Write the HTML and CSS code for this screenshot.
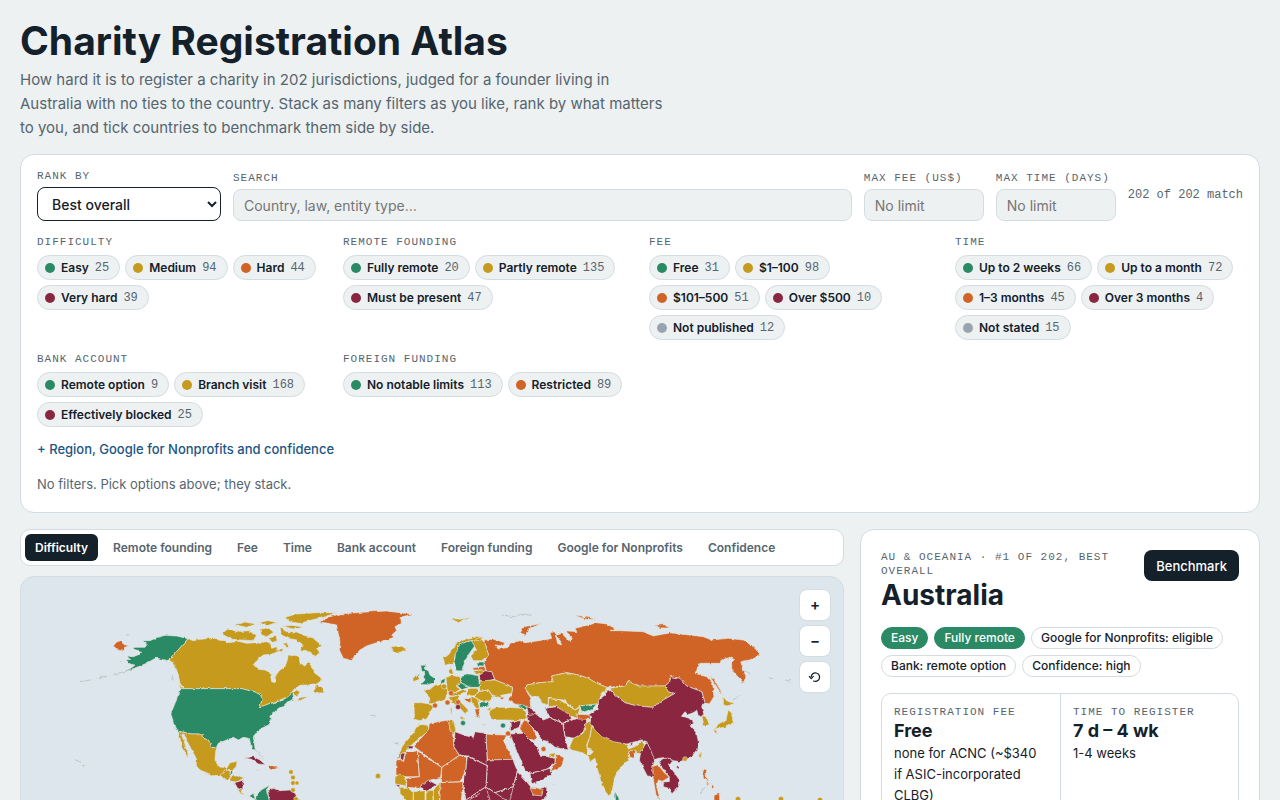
FILE: index.html
```html
<!DOCTYPE html>
<html lang="en">
<head>
<meta charset="utf-8">
<meta name="viewport" content="width=device-width, initial-scale=1">
<title>Charity Registration Atlas</title>
<link rel="stylesheet" href="styles.css">
</head>
<body>
<header class="masthead">
  <h1>Charity Registration Atlas</h1>
  <p>How hard it is to register a charity in 202 jurisdictions, judged for a founder living in Australia with no ties to the country. Stack as many filters as you like, rank by what matters to you, and tick countries to benchmark them side by side.</p>
</header>

<section class="card filters">
  <div class="controls">
    <div class="field rank"><label class="label" for="rank">Rank by</label><select id="rank"><option>Best overall</option></select></div>
    <div class="field search"><label class="label" for="search">Search</label><input id="search" type="search" placeholder="Country, law, entity type…"></div>
    <div class="field limit"><label class="label" for="fee">Max fee (US$)</label><input id="fee" type="text" placeholder="No limit"></div>
    <div class="field limit"><label class="label" for="days">Max time (days)</label><input id="days" type="text" placeholder="No limit"></div>
    <div class="matches">202 of 202 match</div>
  </div>
  <div class="groups">
    <div class="group"><div class="label">Difficulty</div><div class="chips">
      <button class="chip easy">Easy <span>25</span></button><button class="chip medium">Medium <span>94</span></button><button class="chip hard">Hard <span>44</span></button><button class="chip severe">Very hard <span>39</span></button>
    </div></div>
    <div class="group"><div class="label">Remote founding</div><div class="chips">
      <button class="chip easy">Fully remote <span>20</span></button><button class="chip medium">Partly remote <span>135</span></button><button class="chip severe">Must be present <span>47</span></button>
    </div></div>
    <div class="group"><div class="label">Fee</div><div class="chips fee-chips">
      <button class="chip easy">Free <span>31</span></button><button class="chip medium">$1–100 <span>98</span></button><button class="chip hard">$101–500 <span>51</span></button><button class="chip severe">Over $500 <span>10</span></button><button class="chip unknown">Not published <span>12</span></button>
    </div></div>
    <div class="group"><div class="label">Time</div><div class="chips">
      <button class="chip easy">Up to 2 weeks <span>66</span></button><button class="chip medium">Up to a month <span>72</span></button><button class="chip hard">1–3 months <span>45</span></button><button class="chip severe">Over 3 months <span>4</span></button><button class="chip unknown">Not stated <span>15</span></button>
    </div></div>
    <div class="group"><div class="label">Bank account</div><div class="chips">
      <button class="chip easy">Remote option <span>9</span></button><button class="chip medium">Branch visit <span>168</span></button><button class="chip severe">Effectively blocked <span>25</span></button>
    </div></div>
    <div class="group"><div class="label">Foreign funding</div><div class="chips">
      <button class="chip easy">No notable limits <span>113</span></button><button class="chip hard">Restricted <span>89</span></button>
    </div></div>
  </div>
  <button class="more">+ Region, Google for Nonprofits and confidence</button>
  <p class="active-filters">No filters. Pick options above; they stack.</p>
</section>

<main class="columns">
  <div class="left">
    <nav class="tabs" aria-label="Colour map by">
      <button class="tab current">Difficulty</button><button class="tab">Remote founding</button><button class="tab">Fee</button><button class="tab">Time</button><button class="tab">Bank account</button><button class="tab">Foreign funding</button><button class="tab">Google for Nonprofits</button><button class="tab">Confidence</button>
    </nav>
    <div class="map">
      <svg viewBox="21 577 822 420" role="img" aria-label="World map coloured by difficulty">
        <defs>
          <filter id="coast" x="-5%" y="-5%" width="110%" height="110%">
            <feTurbulence type="fractalNoise" baseFrequency="0.22" numOctaves="2" seed="4" result="n"/>
            <feDisplacementMap in="SourceGraphic" in2="n" scale="3" xChannelSelector="R" yChannelSelector="G"/>
          </filter>
        </defs>
        <g filter="url(#coast)">
        <!-- Alaska, Chukotka tip and Hawaii -->
        <g transform="translate(70 600) scale(.33333)" class="land">
          <path class="g" d="M354 116 300 178 290 182 275 178 258 174 240 184 225 192 205 200 185 208 160 216 185 203 195 195 180 192 168 180 180 178 172 168 190 170 205 164 215 154 190 148 195 142 222 142 232 134 218 122 240 122 262 112 285 106 320 108Z"/>
          <path class="o" d="M130 138 140 126 152 122 160 132 176 138 164 142 156 152 144 150Z"/>
          <path class="thin" d="M185 207 160 216 130 223M110 228 80 236M62 240 28 245M168 105 180 104M150 182 158 184M308 185 325 215M318 180 325 205M306 225 310 242"/>
          <path class="g" d="M36 494 44 497 40 502Z"/><path class="thin" d="M14 479 22 482 32 488"/>
        </g>
        <!-- Americas -->
        <g transform="translate(200 600) scale(.33333)" class="land">
          <path class="y" d="M-36 116-20 122 0 118 20 116 45 112 55 120 75 122 90 128 115 124 140 130 165 128 180 130 195 122 210 130 215 145 230 140 235 155 215 162 190 165 170 180 160 195 175 208 195 210 210 218 215 245 225 248 228 225 240 210 255 200 262 180 265 168 285 166 298 172 300 190 315 198 325 185 335 200 345 220 362 232 368 240 345 255 320 255 300 256 282 268 272 282 290 270 300 276 292 290 278 282 270 292 255 294 230 304 205 312 178 322 186 300 182 285 165 276 150 272 125 266H-48L-60 250-65 225-72 205-80 190-90 178Z"/>
          <path class="y" d="M340 274 350 252 365 262 373 279 355 278ZM286 304 300 292 325 290 305 300ZM-68 250-48 268-55 270Z"/>
          <path class="y" d="M240 82 260 95 290 96 310 105 340 115 366 137 350 145 360 160 342 167 320 152 300 150 310 135 290 120 265 115 245 105ZM65 102 85 85 110 95 145 92 170 105 160 122 125 120 95 118ZM255 52 290 42 350 38 410 38 370 52 335 60 300 70 270 66ZM105 74 135 66 165 72 140 82ZM175 68 205 62 235 68 200 76ZM180 88 198 84 222 96 200 110 184 104ZM205 115 228 108 232 122 215 128ZM228 148 250 146 246 160ZM250 78 280 76 310 82 280 88ZM248 130 262 128 262 142Z"/>
          <path class="g" d="M-60 266H125L150 272 165 276 182 285 186 300 178 322 205 312 240 304 262 292 278 278 282 298 262 306 250 318 235 325 220 340 212 345 215 360 200 378 185 385 165 400 160 412 166 450 155 448 148 415 130 412 115 420 100 412 75 422 55 430 48 445 35 440 25 420 15 415 5 405-5 402-25 402-45 398-65 394-80 370-87 340-75 310-62 280Z"/>
          <path class="y" d="M-65 394-45 398-25 402-5 402 5 405 15 415 25 420 35 440 48 445 45 480 58 500 80 505 90 488 112 484 108 500 98 510 85 508 78 526 60 526 40 527 0 510-12 497-10 478-25 450-38 425-48 402-55 404-46 430-36 462-38 472-55 435Z"/>
          <path class="y" d="M60 526 76 512 90 510 92 530 80 542ZM82 538 100 528 118 528 132 534 108 546 95 544ZM112 566 124 570 132 586 120 578Z"/>
          <path class="g" d="M92 512 98 510 96 526 90 526ZM132 584 145 590 160 580 166 598 150 592ZM168 600 175 575 208 556 200 572 208 600 204 620 166 620Z"/>
          <path class="m" d="M104 548 130 540 128 572 112 564ZM203 572 220 565 240 572 270 570 288 582 280 600 282 620 215 620 208 600ZM132 474 160 470 180 480 196 494 175 492 155 478Z"/>
          <path class="o" d="M204 498 216 496 236 504 216 510ZM285 600 300 598 300 620 285 620Z"/>
          <path class="y" d="M168 508 178 509 174 512ZM240 511 248 511 246 514Z"/>
          <path class="o" d="M358 66 390 50 420 42 500 36 560 33 600 38 638 43 600 52 605 70 585 80 590 92 575 105 582 112 560 120 530 128 500 138 480 150 465 165 455 182 430 175 418 150 420 125 415 100 410 75 385 70Z"/>
          <path class="y" d="M572 142 585 140 600 138 620 148 600 157 582 155Z"/>
          <path class="thin" d="M165 450 182 458M174 460 190 476M512 346 528 348M584 428 592 432"/>
        </g>
        <!-- Europe, Africa and Asia -->
        <g transform="translate(380 600) scale(.33333)" class="land">
          <path class="o" d="M312 120 340 118 375 128 368 138 345 135 355 147 385 142 390 130 420 122 435 128 490 120 515 115 510 98 525 95 532 130 545 135 540 118 525 108 545 100 570 125 575 110 555 92 590 95 585 85 625 75 650 68 680 72 705 85 690 92 720 92 790 95 820 108 870 98 970 110 995 120 1045 115 1090 120 1120 140 1140 162 1110 180 1082 185 1098 230 1090 248 1055 210 1055 190 1065 180 1050 172 1025 180 1020 190 960 190 945 220 980 230 998 250 1002 290 988 312 975 308 965 275 920 258 900 235 870 230 870 245 855 258 780 260 745 243 735 258 680 262 650 250 625 235 595 225 560 218 515 228 520 245 480 248 440 255 440 275 450 290 452 325 430 318 405 312 385 300 395 280 398 262 370 250 345 240 335 215 318 210 312 186 325 165 315 130Z"/>
          <path class="o" d="M420 100 432 80 485 70 445 86 438 106ZM580 45 605 48 650 58 620 58ZM826 76 850 74 870 84 840 84ZM990 230 1002 238 1032 288 1018 272Z"/>
          <path class="y" d="M188 172 205 165 230 130 255 118 285 108 312 113 300 122 275 122 260 125 238 135 226 162 222 188 195 196ZM272 124 300 112 315 130 326 165 305 182 280 182 272 168 290 150ZM205 210 215 200 220 222 208 222ZM98 234 115 225 118 238 100 245ZM34 142 48 138 66 139 80 148 60 157 42 155ZM210 54 240 58 275 52 235 68Z"/>
          <path class="g" d="M238 135 260 125 275 124 284 138 265 165 255 185 245 213 228 212 224 188 226 162ZM122 196 138 195 135 208 145 212 150 225 165 236 160 250 140 254 122 254 135 240 130 230 135 222 125 212ZM114 220 121 220 120 227ZM290 186 312 186 312 198 294 197ZM182 242 196 234 194 248 184 250ZM242 230 270 222 296 228 298 262 270 262 245 252ZM230 256 250 250 268 262 245 268ZM298 306 330 305 325 320 300 322Z"/>
          <path class="o" d="M278 204 312 199 318 210 300 210 280 210Z"/>
          <path class="m" d="M298 225 315 212 335 215 344 238 325 244 300 242Z"/>
          <path class="y" d="M280 212 306 210 308 220 292 226ZM198 232 215 226 240 230 245 252 230 256 240 268 225 278 202 276ZM130 270 150 268 165 255 185 251 200 268 203 280 195 300 175 307 150 312 148 290ZM102 308 125 308 150 312 160 320 150 340 140 357 120 362 103 358ZM203 282 225 278 250 268 258 274 245 284 215 290ZM258 276 270 265 292 265 296 272 280 288 258 286ZM292 275 325 270 338 290 330 303 298 302 284 288ZM298 262 300 243 345 240 370 250 398 262 395 280 362 286 368 297 352 290 335 284 325 270 300 274ZM205 292 235 284 236 300 265 330 258 345 250 335 232 318 215 306ZM236 350 252 352 250 360ZM210 325 216 325 215 345ZM272 290 292 294 298 322 290 328 274 305Z"/>
          <path class="o" d="M284 328 300 325 296 340 301 358 290 350ZM252 296 272 294 274 308 260 304ZM358 292 374 292 366 300Z"/>
          <path class="y" d="M328 330 350 322 385 322 430 325 442 355 415 362 380 360 340 360 328 345ZM320 324 334 324 328 332ZM305 372 322 374 310 376Z"/>
          <path class="g" d="M412 312 440 318 442 327 420 324Z"/>
          <path class="m" d="M440 320 455 326 470 345 446 345ZM390 365 422 362 420 380 392 394Z"/>
          <path class="o" d="M422 376 435 358 450 372 470 410 462 422 425 402ZM384 400 400 405 410 395 405 415 390 415Z"/>
          <path class="y" d="M440 255 480 248 520 245 515 228 560 218 595 225 625 235 650 250 680 262 675 275 660 290 655 312 600 318 585 330 550 300 505 295 505 318 488 308 475 290 455 290 438 270ZM690 265 735 258 745 243 775 258 855 258 865 275 885 280 850 300 820 322 770 318 735 308 705 285ZM505 295 540 300 585 330 600 322 592 355 565 345 525 318 505 320Z"/>
          <path class="m" d="M495 325 530 320 570 345 575 356 548 370 510 352ZM440 345 465 340 490 360 510 352 548 370 555 410 565 450 525 442 505 425 485 420 470 395 445 370ZM550 370 575 360 610 352 622 364 610 395 585 415 555 410ZM390 402 430 400 470 440 480 465 525 475 525 490 500 508 450 520 435 510 405 440ZM450 520 510 505 515 525 455 552Z"/>
          <path class="g" d="M602 318 650 312 635 330 602 338Z"/>
          <path class="o" d="M588 342 630 345 632 358 595 357ZM510 515 525 490 528 462 552 475 545 500Z"/>
          <path class="y" d="M505 463 526 458 522 474ZM565 448 580 415 610 400 620 365 645 362 650 375 635 385 630 410 620 435 625 470 608 458ZM635 378 662 375 665 395 685 415 740 432 745 447 765 440 785 422 795 436 785 462 770 460 745 460 745 480 720 505 705 530 695 580 685 588 665 550 650 500 645 475 630 485 625 470 640 455 620 440 630 410Z"/>
          <path class="m" d="M680 266 705 285 735 308 770 318 820 322 850 300 885 280 865 275 855 258 870 245 870 230 900 235 920 258 965 275 975 308 965 318 972 345 955 348 950 330 925 345 915 335 905 348 925 354 940 365 928 375 950 400 955 425 950 450 935 470 900 485 880 482 860 472 835 475 822 480 810 450 800 425 785 420 740 432 700 425 665 410 645 390 630 370 635 350 625 345 655 325 655 300 675 285ZM745 430 760 430 758 438ZM888 500 900 496 896 508Z"/>
          <path class="o" d="M745 452 768 452 762 475 750 472ZM814 500 835 494 850 515 868 532 845 545 835 540 830 560 842 602 828 584 822 550Z"/>
          <path class="m" d="M782 458 800 425 812 450 824 482 818 500 820 530 802 528 790 505 778 480ZM835 482 860 472 880 484 865 492 895 535 896 560 875 582 870 566 850 560 850 546 868 545 868 530 850 510Z"/>
          <path class="y" d="M965 345 980 352 988 374 972 378ZM1030 290 1040 302 1060 310 1045 318 1030 315ZM1045 328 1055 340 1060 370 1035 382 1010 385 1000 395 1015 372 1038 360ZM1000 392 1010 390 1010 402ZM958 460 966 456 962 480Z"/>
          <path class="o" d="M968 508 980 508 978 530 986 545 970 535ZM978 545 988 548 984 556ZM992 550 1002 560 996 568ZM1002 586 1018 580 1020 610 1002 600Z"/>
          <path class="g" d="M702 578 715 590 720 612 704 612Z"/>
          <!-- Africa -->
          <path class="y" d="M118 372 143 376 147 392 100 430 75 455 48 482 70 435 95 405ZM205 362 220 360 228 390 218 408 208 390Z"/>
          <path class="o" d="M148 370 205 360 210 390 218 405 222 440 238 466 185 502 100 438 145 392ZM318 402 345 404 382 405 370 420 398 478 322 480ZM48 482 72 482 76 455 112 453 118 530 75 530 48 525ZM112 453 185 502 182 532 145 542 120 565 80 562 80 535 118 530ZM185 502 238 466 260 472 258 510 240 545 185 548ZM180 548 250 545 242 620 180 620Z"/>
          <path class="m" d="M225 395 260 408 280 412 285 395 318 400 322 497 262 468 238 465 222 440ZM322 497 322 480 398 478 412 512 400 560 345 578 318 560ZM262 468 322 497 318 560 258 600 250 560 258 510ZM120 560 145 540 172 555 140 574ZM258 600 318 560 345 578 400 560 412 515 440 545 460 570 500 560 500 590 440 640 240 640ZM80 438 100 438 98 446 82 446ZM62 462 75 458 70 480 62 482Z"/>
          <path class="border" d="M318 560 330 600M345 578 385 605M400 560 390 600M268 600 300 580"/>
          <path class="y" d="M45 530 60 522 78 532 78 558 45 552ZM60 562 82 562 100 578 100 625 60 580ZM100 575 135 572 135 620 100 620ZM138 574 158 570 160 620 138 620ZM160 570 180 548 178 620 160 620Z"/>
          <path class="m" d="M45 554 60 554 58 562Z"/>
          <path class="o" d="M450 565 490 568 485 588 460 585Z"/>
          <path class="thin" d="M365 45 400 50 430 42 455 46M1090 212 1110 220M1165 234 1180 236M1215 240 1230 243M1058 300 1080 286M960 580 975 562M520 552 524 556M45 430 55 432"/>
        </g>
        </g>
        <!-- Small states -->
        <g class="dots">
          <g class="y"><circle cx="291" cy="772" r="2.3"/><circle cx="293" cy="777.5" r="2.3"/><circle cx="293" cy="783" r="2.3"/><circle cx="297" cy="783" r="2"/><circle cx="293" cy="790" r="2.3"/><circle cx="296" cy="799" r="2.3"/><circle cx="378" cy="776" r="2.6"/><circle cx="444" cy="686.5" r="2.6"/><circle cx="685" cy="759" r="2.3"/><circle cx="738" cy="799" r="2.6"/><circle cx="781" cy="799" r="2.6"/><circle cx="820" cy="800" r="2.6"/></g>
          <g class="o"><circle cx="435" cy="705.5" r="2.5"/><circle cx="451" cy="693" r="2.5"/><circle cx="447.5" cy="702.5" r="2.5"/><circle cx="458" cy="702" r="2.5"/><circle cx="508" cy="733.5" r="2.5"/><circle cx="543.5" cy="749" r="2.5"/></g>
          <g class="m"><circle cx="458" cy="707" r="2.5"/></g>
          <g class="g"><circle cx="463" cy="723" r="2.5"/><circle cx="503" cy="725.5" r="2.5"/></g>
        </g>
      </svg>
      <div class="zoom"><button aria-label="Zoom in">+</button><button aria-label="Zoom out">−</button><button aria-label="Reset view"><svg viewBox="0 0 14 14"><path d="M3.2 7a4.2 4.2 0 1 1 2 3.7M1 6.2 3.2 8.6 5.6 6.2"/></svg></button></div>
    </div>
  </div>

  <aside class="card detail">
    <div class="detail-head">
      <div><div class="label">AU &amp; Oceania · #1 of 202, best overall</div><h2>Australia</h2></div>
      <button class="benchmark">Benchmark</button>
    </div>
    <div class="tags"><span class="tag solid">Easy</span><span class="tag solid">Fully remote</span><span class="tag">Google for Nonprofits: eligible</span><span class="tag">Bank: remote option</span><span class="tag">Confidence: high</span></div>
    <div class="facts">
      <div class="fact"><div class="label">Registration fee</div><strong>Free</strong><p>none for ACNC (~$340 if ASIC-incorporated CLBG)</p></div>
      <div class="fact"><div class="label">Time to register</div><strong>7 d – 4 wk</strong><p>1-4 weeks</p></div>
    </div>
  </aside>
</main>
</body>
</html>
```

FILE: styles.css
```css
:root {
  --ink: #14202a;
  --muted: #56656f;
  --line: #d3dce1;
  --page: #edf1f2;
  --easy: #2b8a66;
  --medium: #c69a1c;
  --hard: #d06427;
  --severe: #8a2740;
  --unknown: #98a5ae;
  --mono: "Liberation Mono", monospace;
}
* { box-sizing: border-box; }
body {
  margin: 0;
  padding: 20px;
  background: var(--page);
  color: var(--ink);
  font: 14px/20px Inter, sans-serif;
}
h1, h2, p { margin: 0; }
button, input, select { font: inherit; color: inherit; }
button { cursor: pointer; }

.masthead { margin-bottom: 14px; }
.masthead h1 { font-size: 39px; line-height: 42px; font-weight: 700; margin-bottom: 6px; }
.masthead p { max-width: 650px; color: var(--muted); font-size: 15px; line-height: 24px; }

.card { background: #fff; border: 1px solid var(--line); border-radius: 14px; }
.label {
  display: block;
  color: var(--muted);
  font: 11px/14px var(--mono);
  letter-spacing: 1px;
  text-transform: uppercase;
}

.filters { padding: 14px 16px 18px; margin-bottom: 16px; }
.controls { display: flex; align-items: flex-end; gap: 12px; margin-bottom: 14px; }
.field .label { margin-bottom: 4px; white-space: nowrap; }
.field input, .field select { display: block; width: 100%; }
.field input {
  height: 32px;
  padding: 0 10px;
  border: 1px solid var(--line);
  border-radius: 8px;
  background: var(--page);
}
.field input::placeholder { color: #757575; }
.field select {
  height: 34px;
  padding: 0 0 0 10px;
  border: 1px solid var(--ink);
  border-radius: 8px;
  background: #fff;
  font-weight: 500;
}
.rank { width: 184px; }
.search { flex: 1; }
.limit { width: 120px; }
.matches { align-self: center; color: var(--muted); font: 12px/16px var(--mono); white-space: nowrap; }

.groups { display: grid; grid-template-columns: repeat(auto-fill, minmax(270px, 1fr)); gap: 12px 18px; }
.group .label { margin-bottom: 6px; }
.chips { display: flex; flex-wrap: wrap; gap: 5px; }
.fee-chips { max-width: 270px; }
.chip {
  display: inline-flex;
  align-items: center;
  gap: 6px;
  height: 25px;
  padding: 0 10px 0 7px;
  border: 1px solid var(--line);
  border-radius: 13px;
  background: var(--page);
  font-size: 12px;
  font-weight: 600;
  white-space: nowrap;
}
.chip::before { content: ""; width: 10px; height: 10px; border-radius: 50%; background: var(--unknown); }
.chip.easy::before { background: var(--easy); }
.chip.medium::before { background: var(--medium); }
.chip.hard::before { background: var(--hard); }
.chip.severe::before { background: var(--severe); }
.chip span { color: var(--muted); font: 12px/16px var(--mono); }
.more { display: block; margin-top: 12px; padding: 0; border: 0; background: none; color: #1d5583; font-size: 13px; font-weight: 500; }
.active-filters { margin-top: 15px; color: var(--muted); font-size: 13px; }

.columns { display: grid; grid-template-columns: minmax(0, 1fr) 400px; gap: 16px; align-items: start; }
.tabs {
  display: flex;
  gap: 5px;
  padding: 4px;
  margin-bottom: 10px;
  border: 1px solid var(--line);
  border-radius: 10px;
  background: #fff;
}
.tab { padding: 4px 10px 3px; border: 0; border-radius: 6px; background: none; color: var(--muted); font-size: 12px; font-weight: 600; white-space: nowrap; }
.tab.current { background: var(--ink); color: #fff; }

.map { position: relative; border: 1px solid var(--line); border-radius: 14px; background: #dde6ec; overflow: hidden; }
.map > svg { display: block; width: 100%; height: auto; }
.g { fill: var(--easy); }
.y { fill: var(--medium); }
.o { fill: var(--hard); }
.m { fill: var(--severe); }
.land path { stroke: #e6e5dd; stroke-width: 2; stroke-linejoin: round; }
.land .thin { fill: none; stroke: #a8bab5; }
.land .border { fill: none; }
.dots circle { stroke: #e6e5dd; stroke-width: 0.5; }
.zoom { position: absolute; top: 12px; right: 12px; display: grid; gap: 4px; }
.zoom button {
  display: grid;
  place-items: center;
  width: 32px;
  height: 32px;
  padding: 0;
  border: 1px solid var(--line);
  border-radius: 8px;
  background: #fff;
  font-size: 15px;
  font-weight: 600;
}
.zoom svg { width: 14px; height: 14px; fill: none; stroke: var(--ink); stroke-width: 1.2; }

.detail { padding: 20px; }
.detail-head { display: flex; gap: 16px; justify-content: space-between; align-items: flex-start; margin-bottom: 15px; }
.detail h2 { font-size: 28px; line-height: 34px; font-weight: 700; }
.benchmark { height: 31px; padding: 0 12px; border: 0; border-radius: 8px; background: var(--ink); color: #fff; font-size: 13px; font-weight: 500; }
.tags { display: flex; flex-wrap: wrap; gap: 6px; margin-bottom: 16px; }
.tag { height: 22px; padding: 0 9px; border: 1px solid var(--line); border-radius: 11px; font-size: 12px; line-height: 20px; font-weight: 500; white-space: nowrap; }
.tag.solid { border-color: var(--easy); background: var(--easy); color: #fff; }
.facts { display: grid; grid-template-columns: 1fr 1fr; border: 1px solid var(--line); border-radius: 10px; }
.fact { padding: 11px 12px; }
.fact + .fact { border-left: 1px solid var(--line); }
.fact strong { display: block; font-size: 18px; line-height: 24px; }
.fact p { font-size: 13px; line-height: 21px; }
```
